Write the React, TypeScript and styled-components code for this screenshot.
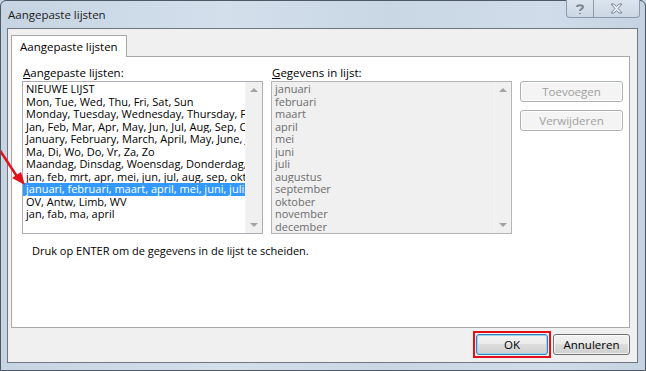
import React from 'react';
import styled, { createGlobalStyle } from 'styled-components';

const GlobalStyle = createGlobalStyle`
    html, body {
        margin: 0;
        padding: 0;
        background: #c9d6e4;
    }
    * {
        box-sizing: border-box;
    }
`;

const FONT = `"Open Sans", "Noto Sans", "Liberation Sans", sans-serif`;

const Window = styled.div`
    position: relative;
    width: 646px;
    height: 371px;
    display: flex;
    flex-direction: column;
    background: linear-gradient(90deg, #c6d4e3 0%, #d3dfeb 35%, #c9d6e4 60%, #d0dce9 85%, #c4d2e1 100%);
    border: 1px solid #4f5964;
    border-radius: 6px 6px 0 0;
    font-family: ${FONT};
    font-size: 11px;
    color: #000;
`;

const TitleBar = styled.div`
    height: 27px;
    display: flex;
    align-items: flex-start;
    padding-left: 7px;
`;

const Title = styled.div`
    font-size: 11.5px;
    line-height: 27px;
    color: #1b1b1b;
`;

const CaptionButtons = styled.div`
    margin-left: auto;
    margin-right: 5px;
    margin-top: -1px;
    display: flex;
    height: 18px;
    border: 1px solid #8a99ab;
    border-top: none;
    border-radius: 0 0 4px 4px;
    background: linear-gradient(#dbe4ee, #cbd7e4);
    overflow: hidden;
`;

const CaptionButton = styled.div<{ $w: number }>`
    width: ${(p) => p.$w}px;
    display: flex;
    align-items: center;
    justify-content: center;
    & + & {
        border-left: 1px solid #8a99ab;
    }
`;

const Client = styled.div`
    flex: 1;
    margin: 0 7px 7px 6px;
    background: #f0f0f0;
    border: 1px solid #6e7782;
    display: flex;
    flex-direction: column;
    padding: 6px 7px 0 3px;
`;

const TabStrip = styled.div`
    display: flex;
    height: 22px;
    margin-bottom: -1px;
    position: relative;
    z-index: 1;
`;

const Tab = styled.div`
    height: 22px;
    padding: 0 8px;
    display: flex;
    align-items: center;
    background: #fff;
    border: 1px solid #a9a9a9;
    border-bottom: none;
    font-size: 11.5px;
`;

const Panel = styled.div`
    height: 272px;
    background: #fff;
    border: 1px solid #a9a9a9;
    padding: 9px 10px 0 10px;
`;

const Grid = styled.div`
    display: grid;
    grid-template-columns: 241px 241px 103px;
    grid-template-rows: 15px 153px;
    column-gap: 8px;
    row-gap: 0;
`;

const Label = styled.div`
    font-size: 11.5px;
    line-height: 14px;
    padding-left: 1px;
    u {
        text-decoration: underline;
        text-underline-offset: 1px;
    }
`;

const ListBox = styled.div<{ $disabled?: boolean }>`
    display: flex;
    border: 1px solid ${(p) => (p.$disabled ? '#b5b5b5' : '#abadb3')};
    background: ${(p) => (p.$disabled ? '#f0f0f0' : '#fff')};
    overflow: hidden;
`;

const Items = styled.div`
    flex: 1;
    min-width: 0;
    padding-top: 1px;
`;

const Item = styled.div<{ $selected?: boolean; $disabled?: boolean }>`
    height: 12.5px;
    line-height: 12.5px;
    padding-left: 3px;
    white-space: nowrap;
    overflow: hidden;
    color: ${(p) => (p.$selected ? '#fff' : p.$disabled ? '#6d6d6d' : '#000')};
    background: ${(p) => (p.$selected ? '#3399ff' : 'transparent')};
`;

const ScrollBar = styled.div`
    width: 17px;
    flex-shrink: 0;
    display: flex;
    flex-direction: column;
    justify-content: space-between;
    align-items: center;
    background: #f0f0f0;
    border-left: 1px solid #f5f5f5;
    padding: 5px 0;
`;

const SideButtons = styled.div`
    display: flex;
    flex-direction: column;
    gap: 8px;
`;

const PushButton = styled.div<{ $disabled?: boolean }>`
    height: 21px;
    display: flex;
    align-items: center;
    justify-content: center;
    border-radius: 3px;
    font-size: 11.5px;
    border: 1px solid ${(p) => (p.$disabled ? '#adb2b5' : '#707070')};
    color: ${(p) => (p.$disabled ? '#a0a0a0' : '#000')};
    background: ${(p) =>
        p.$disabled
            ? '#f4f4f4'
            : 'linear-gradient(#f2f2f2 0%, #ebebeb 45%, #dddddd 50%, #cfcfcf 100%)'};
    box-shadow: inset 0 0 0 1px rgba(255, 255, 255, 0.7);
`;

const Hint = styled.div`
    margin-top: 10px;
    padding-left: 10px;
    font-size: 11px;
    line-height: 14px;
`;

const Footer = styled.div`
    flex: 1;
    display: flex;
    justify-content: flex-end;
    align-items: center;
    gap: 2px;
    padding-bottom: 2px;
`;

const Highlight = styled.div`
    padding: 1px;
    border: 2px solid #e3101a;
`;

const OkButton = styled(PushButton)`
    width: 72px;
    border-color: #3c7fb1;
    box-shadow: inset 0 0 0 1px #8fd6f7;
`;

const CancelButton = styled(PushButton)`
    width: 77px;
`;

const Arrow = styled.svg`
    position: absolute;
    left: 0;
    top: 144px;
    pointer-events: none;
`;

const Arrows = () => (
    <>
        <svg width="8" height="5" viewBox="0 0 8 5">
            <path d="M0 5 L4 1 L8 5 Z" fill="#a3a3a3" />
        </svg>
        <svg width="8" height="5" viewBox="0 0 8 5">
            <path d="M0 0 L4 4 L8 0 Z" fill="#a3a3a3" />
        </svg>
    </>
);

const lists = [
    'NIEUWE LIJST',
    'Mon, Tue, Wed, Thu, Fri, Sat, Sun',
    'Monday, Tuesday, Wednesday, Thursday, Friday, Saturday, Sunday',
    'Jan, Feb, Mar, Apr, May, Jun, Jul, Aug, Sep, Oct, Nov, Dec',
    'January, February, March, April, May, June, July, August',
    'Ma, Di, Wo, Do, Vr, Za, Zo',
    'Maandag, Dinsdag, Woensdag, Donderdag, Vrijdag, Zaterdag',
    'jan, feb, mrt, apr, mei, jun, jul, aug, sep, okt, nov, dec',
    'januari, februari, maart, april, mei, juni, juli, augustus',
    'OV, Antw, Limb, WV',
    'jan, fab, ma, april',
];

const months = [
    'januari', 'februari', 'maart', 'april', 'mei', 'juni',
    'juli', 'augustus', 'september', 'oktober', 'november', 'december',
];

const App = () => {
    const selected = 8;

    return (
        <>
            <GlobalStyle />
            <Window>
                <TitleBar>
                    <Title>Aangepaste lijsten</Title>
                    <CaptionButtons>
                        <CaptionButton $w={26}>
                            <svg width="10" height="12" viewBox="0 0 10 12">
                                <path d="M2 4 C2 1.5 8 1.5 8 4 C8 6 5 6 5 8 M5 10 L5 11" fill="none" stroke="#7a8594" strokeWidth="2" />
                            </svg>
                        </CaptionButton>
                        <CaptionButton $w={46}>
                            <svg width="13" height="11" viewBox="0 0 13 11">
                                <path d="M1 1 L4 1 L6.5 3.5 L9 1 L12 1 L8 5.5 L12 10 L9 10 L6.5 7.5 L4 10 L1 10 L5 5.5 Z" fill="#eef2f6" stroke="#7a8594" strokeWidth="1" />
                            </svg>
                        </CaptionButton>
                    </CaptionButtons>
                </TitleBar>
                <Client>
                    <TabStrip>
                        <Tab>Aangepaste lijsten</Tab>
                    </TabStrip>
                    <Panel>
                        <Grid>
                            <Label><u>A</u>angepaste lijsten:</Label>
                            <Label><u>G</u>egevens in lijst:</Label>
                            <div />
                            <ListBox>
                                <Items>
                                    {lists.map((l, i) => (
                                        <Item key={l} $selected={i === selected}>{l}</Item>
                                    ))}
                                </Items>
                                <ScrollBar><Arrows /></ScrollBar>
                            </ListBox>
                            <ListBox $disabled>
                                <Items>
                                    {months.map((m) => (
                                        <Item key={m} $disabled>{m}</Item>
                                    ))}
                                </Items>
                                <ScrollBar><Arrows /></ScrollBar>
                            </ListBox>
                            <SideButtons>
                                <PushButton $disabled>Toevoegen</PushButton>
                                <PushButton $disabled>Verwijderen</PushButton>
                            </SideButtons>
                        </Grid>
                        <Hint>Druk op ENTER om de gegevens in de lijst te scheiden.</Hint>
                    </Panel>
                    <Footer>
                        <Highlight>
                            <OkButton>OK</OkButton>
                        </Highlight>
                        <CancelButton>Annuleren</CancelButton>
                    </Footer>
                </Client>
                <Arrow width="32" height="46" viewBox="0 0 32 46">
                    <path d="M-2 4 L17 33" stroke="#e3101a" strokeWidth="2.5" fill="none" />
                    <path d="M24 40 L11 33 L20 27 Z" fill="#e3101a" />
                </Arrow>
            </Window>
        </>
    );
};

export default App;
